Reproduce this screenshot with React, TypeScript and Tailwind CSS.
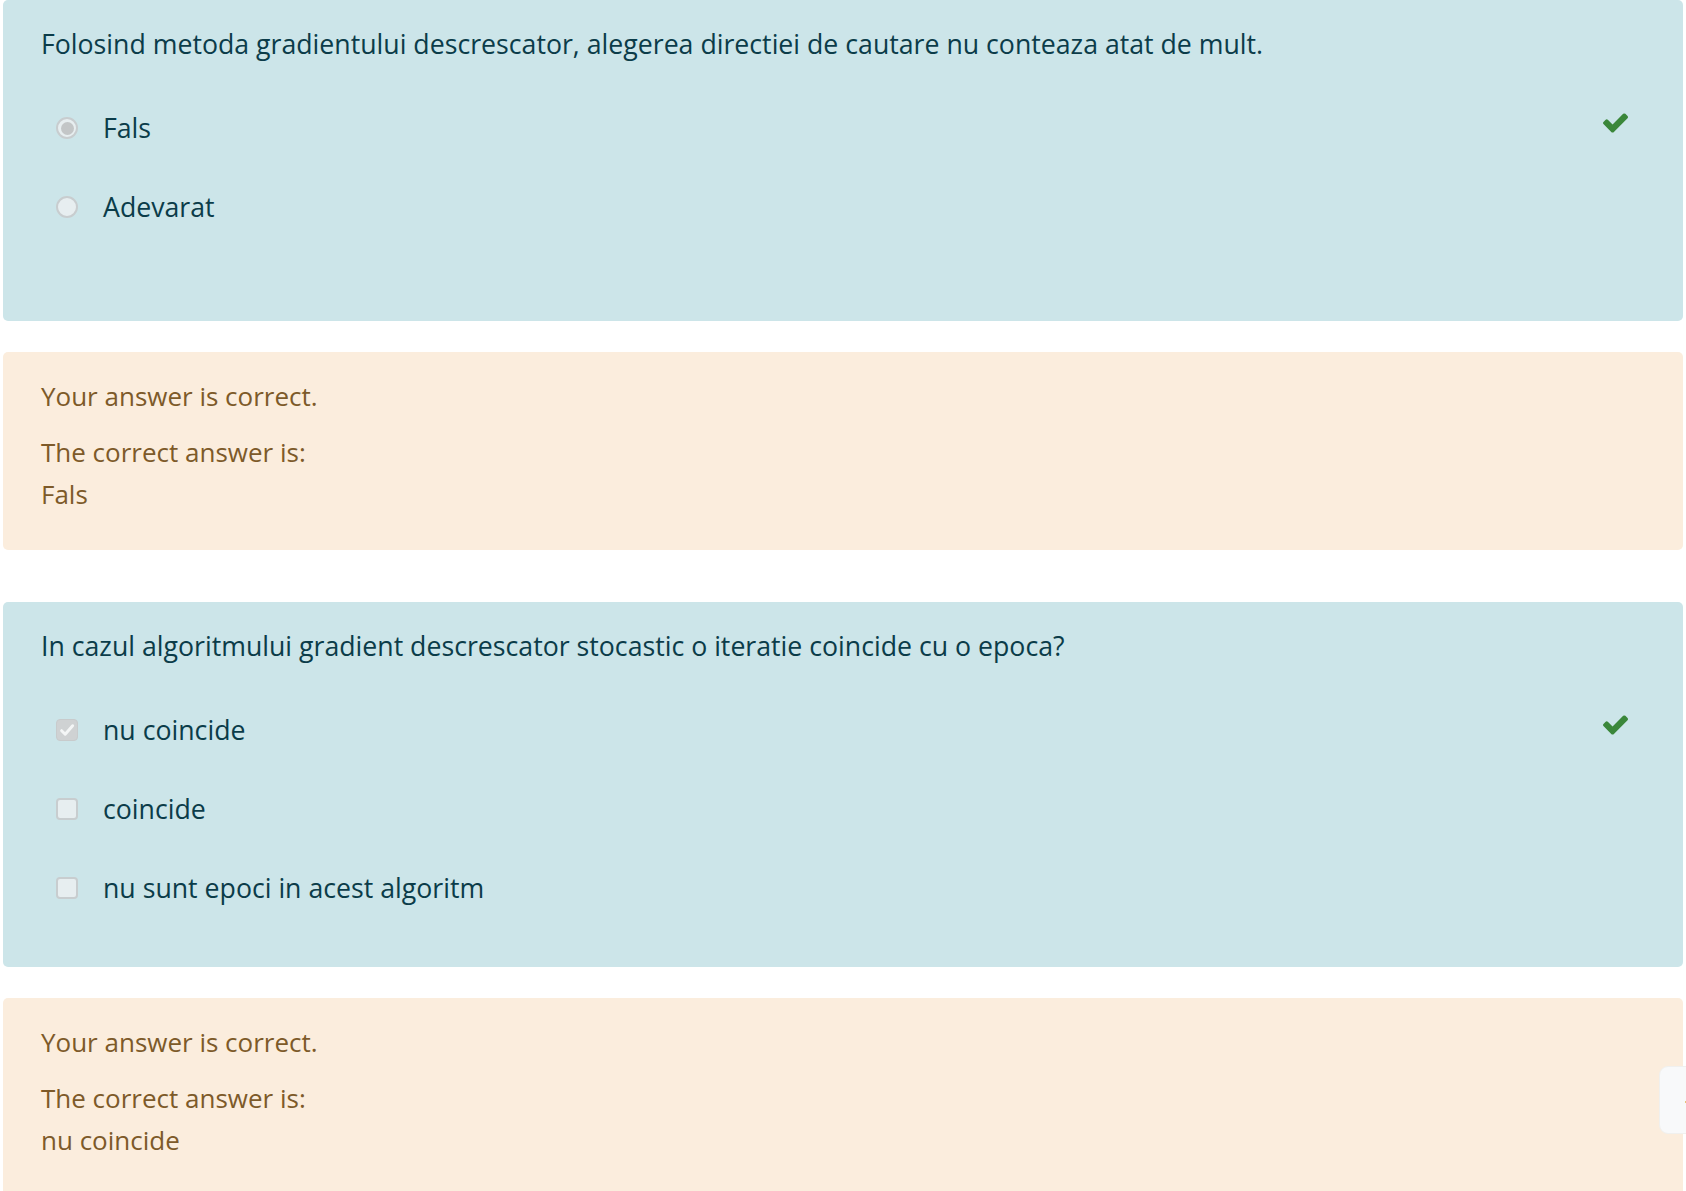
import React from "react";

type Option = { label: string; selected: boolean; correct?: boolean };

interface Question {
  id: number;
  text: string;
  kind: "radio" | "checkbox";
  options: Option[];
  feedback: string;
  rightAnswer: string;
}

const questions: Question[] = [
  {
    id: 1,
    text: "Folosind metoda gradientului descrescator, alegerea directiei de cautare nu conteaza atat de mult.",
    kind: "radio",
    options: [
      { label: "Fals", selected: true, correct: true },
      { label: "Adevarat", selected: false },
    ],
    feedback: "Your answer is correct.",
    rightAnswer: "Fals",
  },
  {
    id: 2,
    text: "In cazul algoritmului gradient descrescator stocastic o iteratie coincide cu o epoca?",
    kind: "checkbox",
    options: [
      { label: "nu coincide", selected: true, correct: true },
      { label: "coincide", selected: false },
      { label: "nu sunt epoci in acest algoritm", selected: false },
    ],
    feedback: "Your answer is correct.",
    rightAnswer: "nu coincide",
  },
];

function CheckIcon() {
  return (
    <svg viewBox="121 334 1550 1188" className="w-[25px] h-[20px] fill-[#3a873a]">
      <path d="M1671 566q0 40-28 68l-724 724-136 136q-28 28-68 28t-68-28l-136-136-362-362q-28-28-28-68t28-68l136-136q28-28 68-28t68 28l294 295 656-657q28-28 68-28t68 28l136 136q28 28 28 68z" />
    </svg>
  );
}

function Radio({ checked }: { checked: boolean }) {
  return (
    <span className="flex items-center justify-center w-[22px] h-[22px] rounded-full border-2 border-[#c8cdcf] bg-[#e7eef0]">
      {checked && <span className="w-[13px] h-[13px] rounded-full bg-[#c3c6c7]" />}
    </span>
  );
}

function Checkbox({ checked }: { checked: boolean }) {
  if (checked) {
    return (
      <span className="flex items-center justify-center w-[22px] h-[22px] rounded-[4px] bg-[#cfd2d3] border border-[#c8cbcc]">
        <svg viewBox="0 0 16 16" className="w-[18px] h-[18px]">
          <path d="M3.2 8.6l3.2 3.2 6.6-7.6" fill="none" stroke="#f4f6f6" strokeWidth="2.6" strokeLinecap="round" strokeLinejoin="round" />
        </svg>
      </span>
    );
  }
  return (
    <span className="w-[22px] h-[22px] rounded-[4px] border-2 border-[#c8cdcf] bg-[#e7eef0]" />
  );
}

export default function App() {
  return (
    <div
      className="relative w-[1686px] h-[1191px] overflow-hidden bg-white"
      style={{ fontFamily: '"Open Sans", "Noto Sans", sans-serif' }}
    >
      <div className="flex flex-col mx-[3px] leading-[42px]">
        {questions.map((q, qi) => (
          <div key={q.id} className={qi > 0 ? "mt-[52px]" : ""}>
            <section
              className={`rounded-[5px] bg-[#cce5e9] text-[#0b3c49] text-[26.7px] pt-[23px] pl-[38px] pr-[55px] ${
                q.kind === "radio" ? "pb-[93px]" : "pb-[58px]"
              }`}
            >
              <p className="mb-[42px]">{q.text}</p>
              <div className="flex flex-col gap-y-[37px] pl-[15px]">
                {q.options.map((o) => (
                  <div key={o.label} className="flex items-center h-[42px]">
                    {q.kind === "radio" ? (
                      <Radio checked={o.selected} />
                    ) : (
                      <Checkbox checked={o.selected} />
                    )}
                    <span className="ml-[25px]">{o.label}</span>
                    {o.correct && (
                      <span className="ml-auto self-start mt-[6px]">
                        <CheckIcon />
                      </span>
                    )}
                  </div>
                ))}
              </div>
            </section>
            <section className="mt-[31px] rounded-[5px] bg-[#fbeddd] text-[#7d5a29] text-[26px] pt-[23px] pb-[35px] pl-[38px]">
              <p>{q.feedback}</p>
              <p className="mt-[14px]">The correct answer is:</p>
              <p>{q.rightAnswer}</p>
            </section>
          </div>
        ))}
      </div>
      <div className="absolute left-[1659px] top-[1066px] w-[40px] h-[68px] rounded-[9px] bg-[#f8f9fa] border border-[#f0f0ee]">
        <span className="absolute left-[25px] top-[34px] w-[2px] h-[2px] rounded-full bg-[#e0b050]" />
      </div>
    </div>
  );
}
